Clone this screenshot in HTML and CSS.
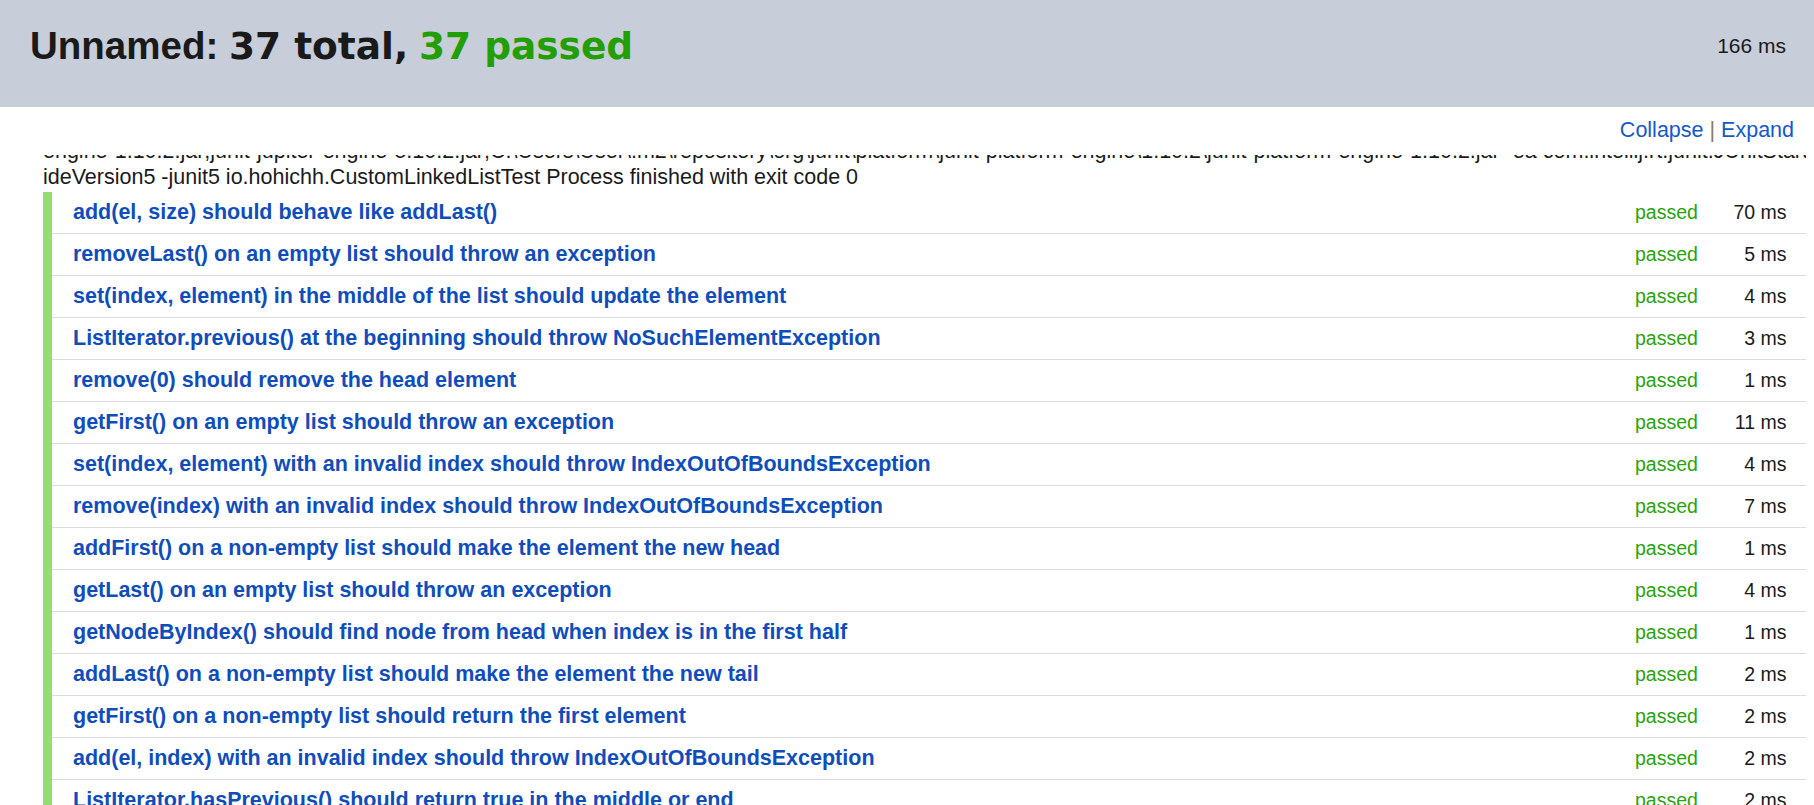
FILE: index.html
```html
<!DOCTYPE html>
<html lang="en">
<head>
<meta charset="utf-8">
<title>Test Results — Unnamed</title>
<link rel="stylesheet" href="styles.css">
</head>
<body>
<div class="page">
  <header class="header">
    <h1 class="title">Unnamed: <span class="total">37 total,</span> <span class="ok">37 passed</span></h1>
    <div class="duration">166 ms</div>
  </header>
  <div class="toolbar">
    <a class="link" href="#">Collapse</a><span class="sep"> | </span><a class="link" href="#">Expand</a>
  </div>
  <main class="content">
    <div class="output">
      <div class="out-line out-clipped">engine-1.10.2.jar;junit-jupiter-engine-5.10.2.jar;C:\Users\User\.m2\repository\org\junit\platform\junit-platform-engine\1.10.2\junit-platform-engine-1.10.2.jar -ea com.intellij.rt.junit.JUnitStarter -</div>
      <div class="out-line">ideVersion5 -junit5 io.hohichh.CustomLinkedListTest Process finished with exit code 0</div>
    </div>
    <div class="tests">
      <div class="test"><span class="name">add(el, size) should behave like addLast()</span><span class="status">passed</span><span class="time">70 ms</span></div>
      <div class="test"><span class="name">removeLast() on an empty list should throw an exception</span><span class="status">passed</span><span class="time">5 ms</span></div>
      <div class="test"><span class="name">set(index, element) in the middle of the list should update the element</span><span class="status">passed</span><span class="time">4 ms</span></div>
      <div class="test"><span class="name">ListIterator.previous() at the beginning should throw NoSuchElementException</span><span class="status">passed</span><span class="time">3 ms</span></div>
      <div class="test"><span class="name">remove(0) should remove the head element</span><span class="status">passed</span><span class="time">1 ms</span></div>
      <div class="test"><span class="name">getFirst() on an empty list should throw an exception</span><span class="status">passed</span><span class="time">11 ms</span></div>
      <div class="test"><span class="name">set(index, element) with an invalid index should throw IndexOutOfBoundsException</span><span class="status">passed</span><span class="time">4 ms</span></div>
      <div class="test"><span class="name">remove(index) with an invalid index should throw IndexOutOfBoundsException</span><span class="status">passed</span><span class="time">7 ms</span></div>
      <div class="test"><span class="name">addFirst() on a non-empty list should make the element the new head</span><span class="status">passed</span><span class="time">1 ms</span></div>
      <div class="test"><span class="name">getLast() on an empty list should throw an exception</span><span class="status">passed</span><span class="time">4 ms</span></div>
      <div class="test"><span class="name">getNodeByIndex() should find node from head when index is in the first half</span><span class="status">passed</span><span class="time">1 ms</span></div>
      <div class="test"><span class="name">addLast() on a non-empty list should make the element the new tail</span><span class="status">passed</span><span class="time">2 ms</span></div>
      <div class="test"><span class="name">getFirst() on a non-empty list should return the first element</span><span class="status">passed</span><span class="time">2 ms</span></div>
      <div class="test"><span class="name">add(el, index) with an invalid index should throw IndexOutOfBoundsException</span><span class="status">passed</span><span class="time">2 ms</span></div>
      <div class="test"><span class="name">ListIterator.hasPrevious() should return true in the middle or end</span><span class="status">passed</span><span class="time">2 ms</span></div>
      <div class="test"><span class="name">size() should return the number of elements</span><span class="status">passed</span><span class="time">1 ms</span></div>
    </div>
  </main>
</div>
</body>
</html>
```

FILE: styles.css
```css
html, body {
  margin: 0;
  padding: 0;
  height: 100%;
  overflow: hidden;
  background: #ffffff;
}

body {
  font-family: "Liberation Sans", Arial, sans-serif;
  color: #1a1a1a;
}

.page {
  display: flex;
  flex-direction: column;
  height: 100vh;
}

.header {
  flex: 0 0 auto;
  height: 107px;
  box-sizing: border-box;
  background: #c7cdd9;
  display: flex;
  align-items: center;
  justify-content: space-between;
  padding: 0 28px 15px 30px;
}

.title {
  margin: 0;
  font-size: 38.5px;
  font-weight: bold;
  color: #1a1a1a;
  white-space: nowrap;
}

.total,
.ok {
  font-family: "DejaVu Sans", "Liberation Sans", sans-serif;
  font-weight: bold;
  font-size: 37.5px;
}

.total {
  color: #1a1a1a;
}

.ok {
  color: #239e05;
}

.duration {
  font-size: 21px;
  color: #1a1a1a;
}

.toolbar {
  flex: 0 0 auto;
  height: 48px;
  box-sizing: border-box;
  padding: 11px 20px 0 0;
  text-align: right;
  font-size: 21.5px;
  background: #ffffff;
}

.link {
  color: #1659c6;
  text-decoration: none;
}

.sep {
  color: #8a7a66;
}

.content {
  flex: 1 1 auto;
  overflow: hidden;
  padding: 0 8px 0 43px;
}

.output {
  margin-top: -17px;
  font-size: 21.5px;
  line-height: 26px;
  color: #1a1a1a;
}

.out-line {
  white-space: nowrap;
  overflow: hidden;
}

.tests {
  margin-top: 2px;
  border-left: 9px solid #95dd72;
}

.test {
  display: flex;
  align-items: center;
  height: 42px;
  box-sizing: border-box;
  border-bottom: 1px solid #dcdcdc;
}

.name {
  flex: 1 1 auto;
  padding-left: 21px;
  font-size: 21.5px;
  font-weight: bold;
  color: #0f4dbb;
  white-space: nowrap;
}

.status {
  flex: 0 0 91px;
  font-size: 19.5px;
  color: #2aa30e;
}

.time {
  flex: 0 0 80px;
  box-sizing: border-box;
  padding-right: 19.5px;
  text-align: right;
  font-size: 19.5px;
  color: #1a1a1a;
}
```
